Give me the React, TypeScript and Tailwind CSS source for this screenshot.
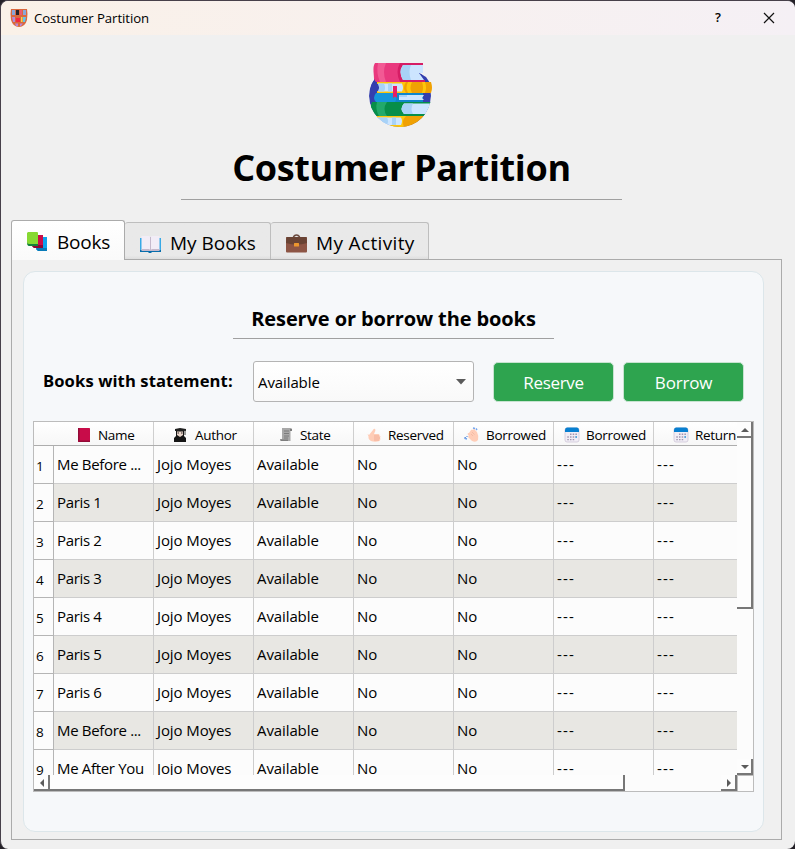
import React from "react";

const BooksLogo = () => (
  <svg width="64" height="64" viewBox="0 0 64 64" className="-ml-px">
    <defs>
      <clipPath id="logoClip">
        <path d="M4 0H64V33H62A31 31 0 0 1 0 33Q0 22 5 17Z" />
      </clipPath>
    </defs>
    <g clipPath="url(#logoClip)">
      <circle cx="31" cy="33" r="31" fill="#343fae" />
      <path d="M50 0H64V21H61L56 13L50 10Z" fill="#f0f0f0" />
      <path d="M50 10L57 14L61 20H50Z" fill="#343fae" />
      <path d="M6 0H54V2H50V17H56V19H7Q4 16 4 9Q4 3 6 0Z" fill="#e9397e" />
      <path d="M9 0H17Q13 9 17 19H11Q7 10 9 0Z" fill="#f25a94" />
      <path d="M31 0H54V2H34Q30 9 34 17H56V19H31Q26 9 31 0Z" fill="#d61d65" />
      <path d="M34 2H54V10H50L55 17H34Q29 9 34 2Z" fill="#cce5ff" />
      <path d="M34 2H42Q39 9 42 17H34Q29 9 34 2Z" fill="#a8d2f7" />
      <path d="M7 30H54V39H7Q3 35 7 30Z" fill="#1696dc" />
      <path d="M26 30H54V32H30V37H54V39H26Q29 35 26 30Z" fill="#0f86cc" />
      <path d="M30 32H55L53 35L55 37H30Z" fill="#cce5ff" />
      <path d="M30 32H38V34H30Z" fill="#a8d2f7" />
      <path d="M34 19H62Q64 25 62 30H34Z" fill="#f0a103" />
      <path d="M8 19H37Q33 25 37 30H8V28H33V21H8Z" fill="#ffc60a" />
      <path d="M9 20.500H33Q35 25 33 28.500H9Q11 25 9 20.500Z" fill="#cce5ff" />
      <path d="M9 20.500H15Q17 25 15 28.500H9Q11 25 9 20.500ZM19 20.500H23V28.500H19Z" fill="#a8d2f7" />
      <path d="M39 19H43Q40 25 43 30H39Q36 25 39 19ZM53 19H56Q58 25 56 30H53Q55 25 53 19Z" fill="#ffc60a" />
      <path d="M3 39H62V41H35V51H62V53H3Q0 46 3 39Z" fill="#078e49" />
      <path d="M8 39H18Q13 46 18 53H10Q6 46 8 39Z" fill="#22a96a" />
      <path d="M35 40.500H62V51H35Q30 46 35 40.500Z" fill="#cce5ff" />
      <path d="M35 40.500H44Q41 46 44 51H35Q30 46 35 40.500Z" fill="#a8d2f7" />
      <path d="M31 53H60V64H31Z" fill="#f0a103" />
      <path d="M6 53H37Q32 58 35 64H18V62H32V55H8Z" fill="#ffc60a" />
      <path d="M8 54.500H32Q34 58 32 62H18Q12 60 8 54.500Z" fill="#cce5ff" />
      <path d="M8 54.500H18Q20 58 18 62Q12 60 8 54.500ZM23 54.500H27V62H23Z" fill="#a8d2f7" />
      <path d="M24 23H28V35L26 33.500L24 35Z" fill="#e91e63" />
    </g>
  </svg>
);

const ShelfIcon = () => (
  <svg width="18" height="18" viewBox="0 0 18 18">
    <path d="M1 0H17Q18 5 17 11Q15 18 9 18Q3 18 1 11Q0 5 1 0Z" fill="#d9683f" />
    <path d="M2 1H5V6H2ZM13 1H16V6H13Z" fill="#8aa6d8" />
    <path d="M6 1H9V6H6Z" fill="#27242b" />
    <path d="M10 1H12V6H10Z" fill="#ed5a70" />
    <path d="M2 8H5V13H3Z" fill="#b58ad8" />
    <path d="M6 9H10V13H6Z" fill="#f3283e" />
    <path d="M11 8H12.500V13H11Z" fill="#f6d44a" />
    <path d="M13 8H16L15 13H13Z" fill="#64c4e9" />
    <path d="M5 14.500H8V17H6ZM10 14.500H13L11 17H10Z" fill="#bb87d5" />
  </svg>
);

const BooksIcon = () => (
  <svg width="22" height="20" viewBox="0 0 22 20">
    <path d="M10 5H20V19H11L9 17Z" fill="#0da2ed" />
    <path d="M10 16H20V19H11L9 17Z" fill="#087bb9" />
    <path d="M6 3H16V16H7L5 14Z" fill="#c90d49" />
    <path d="M6 13H16V16H7L5 14Z" fill="#8c0834" />
    <path d="M1 0H10Q11 0 11 1V13H1Q0 12 0 10V1Z" fill="#86d832" />
    <path d="M0 10Q0 14 2 14H11V12H2Q0 12 0 10Z" fill="#13813b" />
  </svg>
);

const OpenBook = () => (
  <svg width="22" height="20" viewBox="0 0 22 20" className="relative top-px">
    <path d="M0 4H21V18H0Z" fill="#38a9e6" />
    <path d="M0 16H21V18H12L11 19H9L8 18H0Z" fill="#086eac" />
    <path d="M1.500 2H9L10.500 3L12 2H19.500V16H12L10.500 17L9 16H1.500Z" fill="#f2edf7" />
    <path d="M1.500 15H9L10.500 16L12 15H19.500V17H1.500ZM10 3H11V16H10Z" fill="#c5b9cc" />
  </svg>
);

const Briefcase = () => (
  <svg width="21" height="20" viewBox="0 0 21 20" className="relative top-px">
    <path d="M7 4Q8 1 10.500 1Q13 1 14 4" fill="none" stroke="#6b4b40" strokeWidth="1.300" />
    <rect y="3" width="21" height="15.500" rx="1" fill="#8d5545" />
    <path d="M.5 3H20.500L21 9Q11 12 0 9Z" fill="#694334" />
    <rect x="8" y="9" width="5" height="3.500" rx=".5" fill="#ed962e" />
  </svg>
);

type HeadKind = "book" | "author" | "scroll" | "call" | "wave" | "calendar";

const HeadIcon = ({ kind }: { kind: HeadKind }) => (
  <svg width="16" height="16" viewBox="0 0 16 16" className="shrink-0">
    {kind === "book" && (
      <>
        <rect x="2" y="1" width="12" height="14" rx=".6" fill="#c80c49" />
        <path d="M2 1H3.500V13.500H14V15H3Q2 15 2 13Z" fill="#920a36" />
      </>
    )}
    {kind === "author" && (
      <>
        <path d="M4 3H12V9L14 11V15H2V11L4 9Z" fill="#151515" />
        <path d="M3 2L8 1L14 2V4H3Z" fill="#202020" />
        <path d="M5 4.500H11V8L8 10L5 8Z" fill="#e9d5ca" />
        <path d="M5.500 5.500H7V6.500H5.500ZM9 5.500H10.500V6.500H9Z" fill="#302b2a" />
        <path d="M13 3V8" stroke="#40403c" />
      </>
    )}
    {kind === "scroll" && (
      <>
        <path d="M4 1H14Q12.500 2 12.500 4V14H3Q2 14 2 12H4Z" fill="#a8a8a8" />
        <path d="M12 2H14V4H12ZM2 12.500H10V14H3Z" fill="#7d7d7d" />
        <path d="M6 4H11M6 6.500H11M6 9H11M6 11H10" stroke="#777" strokeWidth=".9" />
      </>
    )}
    {kind === "call" && (
      <>
        <path d="M1.500 7L3 8L7 3Q8 1 9 2Q10 2.500 9 4.500L8 7H12.500Q14 7.500 13.500 8.500L14.500 9.500L14 11L14.500 12L13.500 14Q9 15.500 5 14Q2 12 2.500 9.500Z" fill="#ffcdb7" />
        <path d="M8 9H13M8 11H14M8 13H13" stroke="#e9a58e" strokeWidth=".7" />
      </>
    )}
    {kind === "wave" && (
      <>
        <path d="M5 6L7 3Q8 2 8.500 3L10 2Q11 2 11 3L13 5Q15 9 14 13Q12 16 8 14L4 10Q4 9 5 9L3.500 7Q4 5.500 5 6Z" fill="#ffcdb7" />
        <path d="M7 7L9 9M8 5L10.500 7.500" stroke="#edae98" strokeWidth=".6" />
        <path d="M9 1L11 1.500M12 1.500L13 3M1 10V11.500L3 12M3 9V10" stroke="#72a4ed" strokeWidth="1.400" />
      </>
    )}
    {kind === "calendar" && (
      <>
        <rect x="1" y="1" width="14" height="14" rx="2" fill="#f1edf5" stroke="#cfc6d8" strokeWidth=".8" />
        <path d="M3 .5H13Q15 .5 15 3V5H1V3Q1 .5 3 .5Z" fill="#087fd0" />
        <path
          d="M6 6.500H7.500V8H6ZM8.700 6.500H10.200V8H8.700ZM3.300 9.200H4.800V10.700H3.300ZM6 9.200H7.500V10.700H6ZM8.700 9.200H10.200V10.700H8.700ZM3.300 11.900H4.800V13.200H3.300ZM6 11.900H7.500V13.200H6ZM8.700 11.900H10.200V13.200H8.700ZM11.400 6.500H12.900V8H11.400Z"
          fill="#a195b0"
        />
        <path d="M11.400 9.200H12.900V10.700H11.400Z" fill="#1685d0" />
      </>
    )}
  </svg>
);

const Arrow = ({ dir }: { dir: "up" | "down" | "left" | "right" }) => (
  <svg width="8" height="8" viewBox="0 0 8 8">
    <path
      d={{ up: "M0 6L4 2L8 6Z", down: "M0 2L4 6L8 2Z", left: "M6 0L2 4L6 8Z", right: "M2 0L6 4L2 8Z" }[dir]}
      fill="#5b5b5b"
    />
  </svg>
);

const scrollButton =
  "flex shrink-0 items-center justify-center bg-[#fdfdfd] border-r-2 border-b-2 border-r-[#777] border-b-[#777] pt-[2px] pl-[2px]";

const headers: { icon: HeadKind; label: string; pad: string }[] = [
  { icon: "book", label: "Name", pad: "pl-[22px] gap-[6px]" },
  { icon: "author", label: "Author", pad: "pl-[18px] gap-[7px]" },
  { icon: "scroll", label: "State", pad: "pl-[24px] gap-[6px]" },
  { icon: "call", label: "Reserved", pad: "pl-[12px] gap-[6px]" },
  { icon: "wave", label: "Borrowed", pad: "pl-[10px] gap-[6px]" },
  { icon: "calendar", label: "Borrowed", pad: "pl-[10px] gap-[6px]" },
  { icon: "calendar", label: "Return", pad: "pl-[19px] gap-[6px]" },
];

const titles = ["Me Before ...", "Paris 1", "Paris 2", "Paris 3", "Paris 4", "Paris 5", "Paris 6", "Me Before ...", "Me After You"];

const cellTracking = (column: number) =>
  column > 4 ? "tracking-[1.2px]" : column === 0 ? "tracking-[-0.33px]" : "tracking-[-0.1px]";

const BookTable = () => (
  <div className="flex h-[371px] w-[721px] flex-col border border-[#bcbcbc] bg-[#fcfcfc]">
    <div className="flex h-[353px]">
      <div className="h-[353px] w-[703px] overflow-hidden">
        <div className="flex h-6 w-[720px] border-b border-[#adadad] bg-gradient-to-b from-white to-[#f7f7f7]">
          <div className="w-5 shrink-0" />
          {headers.map((h, i) => (
            <div
              key={i}
              className={`flex w-[100px] shrink-0 items-center border-r border-[#cfcfcf] pt-[3px] text-[13.5px] tracking-[-0.3px] ${h.pad}`}
            >
              <HeadIcon kind={h.icon} />
              <span>{h.label}</span>
            </div>
          ))}
        </div>
        {titles.map((title, i) => (
          <div key={i} className="flex h-[38px] w-[720px]">
            <div className="w-5 shrink-0 border-r border-b border-[#b5b5b5] bg-[#fcfcfc] pt-[10px] pl-[2px] text-[13.5px]">
              {i + 1}
            </div>
            {[title, "Jojo Moyes", "Available", "No", "No", "---", "---"].map((cell, j) => (
              <div
                key={j}
                className={`w-[100px] shrink-0 border-r border-b border-[#cdcdcd] pl-[3px] text-[15px] leading-[37px] whitespace-nowrap ${
                  i % 2 ? "bg-[#e8e7e3]" : "bg-[#fcfcfc]"
                } ${cellTracking(j)}`}
              >
                {cell}
              </div>
            ))}
          </div>
        ))}
      </div>
      <div className="flex w-4 flex-col">
        <div className={`h-4 w-4 ${scrollButton}`}><Arrow dir="up" /></div>
        <div className="h-[171px] w-4 border-r-2 border-b-2 border-[#777] bg-[#fdfdfd]" />
        <div className="grow" />
        <div className={`h-4 w-4 ${scrollButton}`}><Arrow dir="down" /></div>
      </div>
    </div>
    <div className="flex h-4">
      <div className={`h-4 w-4 ${scrollButton}`}><Arrow dir="left" /></div>
      <div className="h-4 w-[575px] border-r-2 border-b-2 border-[#777] bg-[#fdfdfd]" />
      <div className="w-[96px]" />
      <div className={`h-4 w-4 ${scrollButton}`}><Arrow dir="right" /></div>
      <div className="h-4 grow border-t border-l border-[#bcbcbc]" />
    </div>
  </div>
);

export default function App() {
  return (
    <div className="h-[849px] w-[795px] overflow-hidden bg-[#242128] font-['Open_Sans',sans-serif] text-black">
      <div className="flex h-full flex-col overflow-hidden rounded-[8px] border-t border-l border-[#47404a] bg-[#f0f0f0]">
        <header className="flex h-[34px] shrink-0 items-center bg-gradient-to-r from-[#faf1e8] to-[#f5f0f5] pl-[9px]">
          <div className="-mt-px"><ShelfIcon /></div>
          <span className="ml-[6px] pt-px text-[13.2px] tracking-[-0.08px]">Costumer Partition</span>
          <span className="mr-[42px] ml-auto text-[13px] font-semibold">?</span>
          <svg width="12" height="12" viewBox="0 0 12 12" className="mr-5">
            <path d="M1 1L11 11M11 1L1 11" stroke="#111" strokeWidth="1.200" />
          </svg>
        </header>
        <section className="ml-[180px] flex h-[165px] w-[441px] shrink-0 flex-col items-center border-b border-[#a0a0a0] pt-7">
          <BooksLogo />
          <h1 className="mt-[14px] text-[36px] leading-[54px] font-bold tracking-[-0.33px] whitespace-nowrap">Costumer Partition</h1>
        </section>
        <nav className="mt-5 ml-[10px] flex h-10 shrink-0 items-end text-[19px]">
          <div className="z-10 flex h-10 w-[114px] items-center rounded-t-[3px] border border-b-0 border-[#ababab] bg-gradient-to-b from-white to-[#fafafa] pt-[3px] pl-[15px]">
            <BooksIcon />
            <span className="ml-[8px] tracking-[-0.2px]">Books</span>
          </div>
          <div className="mb-px flex h-[37px] w-[146px] items-center rounded-t-[3px] border border-b-0 border-l-0 border-[#bebebe] bg-gradient-to-b from-[#e9e9e9] from-90% to-[#dedede] pt-1 pl-[15px]">
            <OpenBook />
            <span className="ml-[8px]">My Books</span>
          </div>
          <div className="mb-px flex h-[37px] w-[158px] items-center rounded-t-[3px] border border-b-0 border-l-0 border-[#bebebe] bg-gradient-to-b from-[#e9e9e9] from-90% to-[#dedede] pt-1 pl-[15px]">
            <Briefcase />
            <span className="ml-[9px] tracking-[0.35px]">My Activity</span>
          </div>
        </nav>
        <main className="-mt-px ml-[10px] h-[581px] w-[771px] shrink-0 border border-[#ababab] pt-[11px] pl-[11px]">
          <div className="h-[561px] w-[741px] rounded-[12px] border border-[#dce6ea] bg-[#f6f8fa] pl-[9px]">
            <h2 className="ml-[200px] h-[67px] w-[321px] border-b border-[#a0a0a0] pt-[32px] text-center text-[20px] leading-[29px] font-bold tracking-[-0.11px] whitespace-nowrap">
              Reserve or borrow the books
            </h2>
            <div className="mt-[22px] flex h-[41px] items-center">
              <span className="w-[220px] pl-[10px] text-[16.6px] font-bold tracking-[0.1px] whitespace-nowrap">Books with statement:</span>
              <div className="flex h-[41px] w-[221px] items-center justify-between rounded-[3px] border border-[#b4b4b4] bg-gradient-to-b from-white to-[#f9f9f9] pr-[7px] pl-1 text-[15px]">
                <span className="pt-[2px] tracking-[-0.1px]">Available</span>
                <svg width="10" height="6" viewBox="0 0 10 6"><path d="M0 0H10L5 5.500Z" fill="#5b5b5b" /></svg>
              </div>
              <button className="ml-[19px] h-10 w-[121px] rounded-[5px] border border-[#c7e3d0] bg-[#2ea44f] pt-[2px] text-[17px] tracking-[-0.3px] text-white">Reserve</button>
              <button className="ml-[9px] h-10 w-[121px] rounded-[5px] border border-[#c7e3d0] bg-[#2ea44f] pt-[2px] text-[17px] tracking-[-0.2px] text-white">Borrow</button>
            </div>
            <div className="mt-[19px]"><BookTable /></div>
          </div>
        </main>
      </div>
    </div>
  );
}
